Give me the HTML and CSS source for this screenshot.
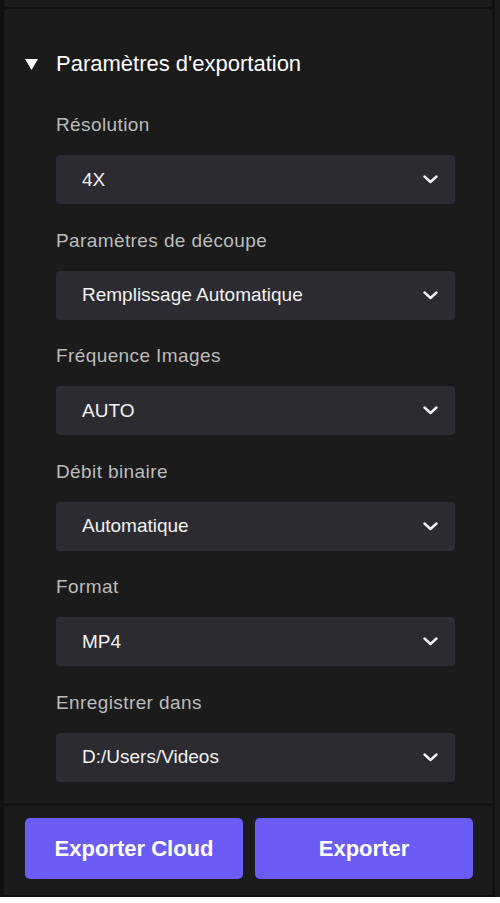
FILE: index.html
```html
<!DOCTYPE html>
<html lang="fr">
<head>
<meta charset="utf-8">
<title>Paramètres d'exportation</title>
<link rel="stylesheet" href="styles.css">
</head>
<body>
<div class="app">
  <div class="column">
    <div class="top-strip"></div>
    <div class="settings">
      <div class="section-title">
        <svg class="caret" width="13" height="11" viewBox="0 0 13 11"><polygon points="0,0 13,0 6.5,11" fill="#ffffff"/></svg>
        <span>Paramètres d'exportation</span>
      </div>
      <div class="field">
        <div class="label">Résolution</div>
        <div class="select"><span>4X</span><svg class="chev" width="15" height="9" viewBox="0 0 15 9"><polyline points="1.5,1.5 7.5,7 13.5,1.5" fill="none" stroke="#f2f2f2" stroke-width="2.4" stroke-linecap="round" stroke-linejoin="round"/></svg></div>
      </div>
      <div class="field">
        <div class="label">Paramètres de découpe</div>
        <div class="select"><span>Remplissage Automatique</span><svg class="chev" width="15" height="9" viewBox="0 0 15 9"><polyline points="1.5,1.5 7.5,7 13.5,1.5" fill="none" stroke="#f2f2f2" stroke-width="2.4" stroke-linecap="round" stroke-linejoin="round"/></svg></div>
      </div>
      <div class="field">
        <div class="label">Fréquence Images</div>
        <div class="select"><span>AUTO</span><svg class="chev" width="15" height="9" viewBox="0 0 15 9"><polyline points="1.5,1.5 7.5,7 13.5,1.5" fill="none" stroke="#f2f2f2" stroke-width="2.4" stroke-linecap="round" stroke-linejoin="round"/></svg></div>
      </div>
      <div class="field">
        <div class="label">Débit binaire</div>
        <div class="select"><span>Automatique</span><svg class="chev" width="15" height="9" viewBox="0 0 15 9"><polyline points="1.5,1.5 7.5,7 13.5,1.5" fill="none" stroke="#f2f2f2" stroke-width="2.4" stroke-linecap="round" stroke-linejoin="round"/></svg></div>
      </div>
      <div class="field">
        <div class="label">Format</div>
        <div class="select"><span>MP4</span><svg class="chev" width="15" height="9" viewBox="0 0 15 9"><polyline points="1.5,1.5 7.5,7 13.5,1.5" fill="none" stroke="#f2f2f2" stroke-width="2.4" stroke-linecap="round" stroke-linejoin="round"/></svg></div>
      </div>
      <div class="field">
        <div class="label">Enregistrer dans</div>
        <div class="select"><span>D:/Users/Videos</span><svg class="chev" width="15" height="9" viewBox="0 0 15 9"><polyline points="1.5,1.5 7.5,7 13.5,1.5" fill="none" stroke="#f2f2f2" stroke-width="2.4" stroke-linecap="round" stroke-linejoin="round"/></svg></div>
      </div>
    </div>
    <div class="actions">
      <button class="btn">Exporter Cloud</button>
      <button class="btn">Exporter</button>
    </div>
  </div>
  <div class="side-strip"></div>
</div>
</body>
</html>
```

FILE: styles.css
```css
html, body {
  margin: 0;
  padding: 0;
  background: #ffffff;
}

body {
  font-family: "Liberation Sans", Arial, sans-serif;
}

.app {
  display: flex;
  height: 897px;
  background: #101010;
  padding-left: 4px;
  gap: 3px;
  box-sizing: border-box;
}

.column {
  width: 488px;
  display: flex;
  flex-direction: column;
}

.side-strip {
  flex: 1;
  background: #1b1b1b;
}

.top-strip {
  height: 7px;
  background: #1b1b1b;
  border-radius: 0 0 3px 3px;
}

.settings {
  margin-top: 2px;
  height: 794px;
  background: #1b1b1b;
  border-radius: 4px 4px 0 0;
  padding: 43px 37px 0 52px;
  box-sizing: border-box;
}

.section-title {
  position: relative;
  height: 24px;
  line-height: 24px;
  font-size: 22px;
  color: #ffffff;
}

.caret {
  position: absolute;
  left: -31px;
  top: 7px;
}

.field {
  margin-top: 26.5px;
}

.section-title + .field {
  margin-top: 39px;
}

.label {
  height: 20px;
  line-height: 20px;
  font-size: 19px;
  letter-spacing: 0.4px;
  color: #bcbcbc;
}

.select {
  margin-top: 20px;
  height: 49px;
  background: #2c2b31;
  border-radius: 4px;
  display: flex;
  align-items: center;
  justify-content: space-between;
  padding: 0 17px 0 26px;
  color: #f2f2f2;
  font-size: 19px;
}

.chev {
  display: block;
}

.actions {
  margin-top: 3px;
  height: 89px;
  background: #1b1b1b;
  display: flex;
  gap: 12px;
  padding: 12px 19px 16px 21px;
  box-sizing: border-box;
}

.btn {
  flex: 1;
  border: none;
  border-radius: 5px;
  background: #6b5cf6;
  color: #ffffff;
  font-family: "Liberation Sans", Arial, sans-serif;
  font-weight: bold;
  font-size: 22px;
  padding: 0;
  cursor: pointer;
}
```
